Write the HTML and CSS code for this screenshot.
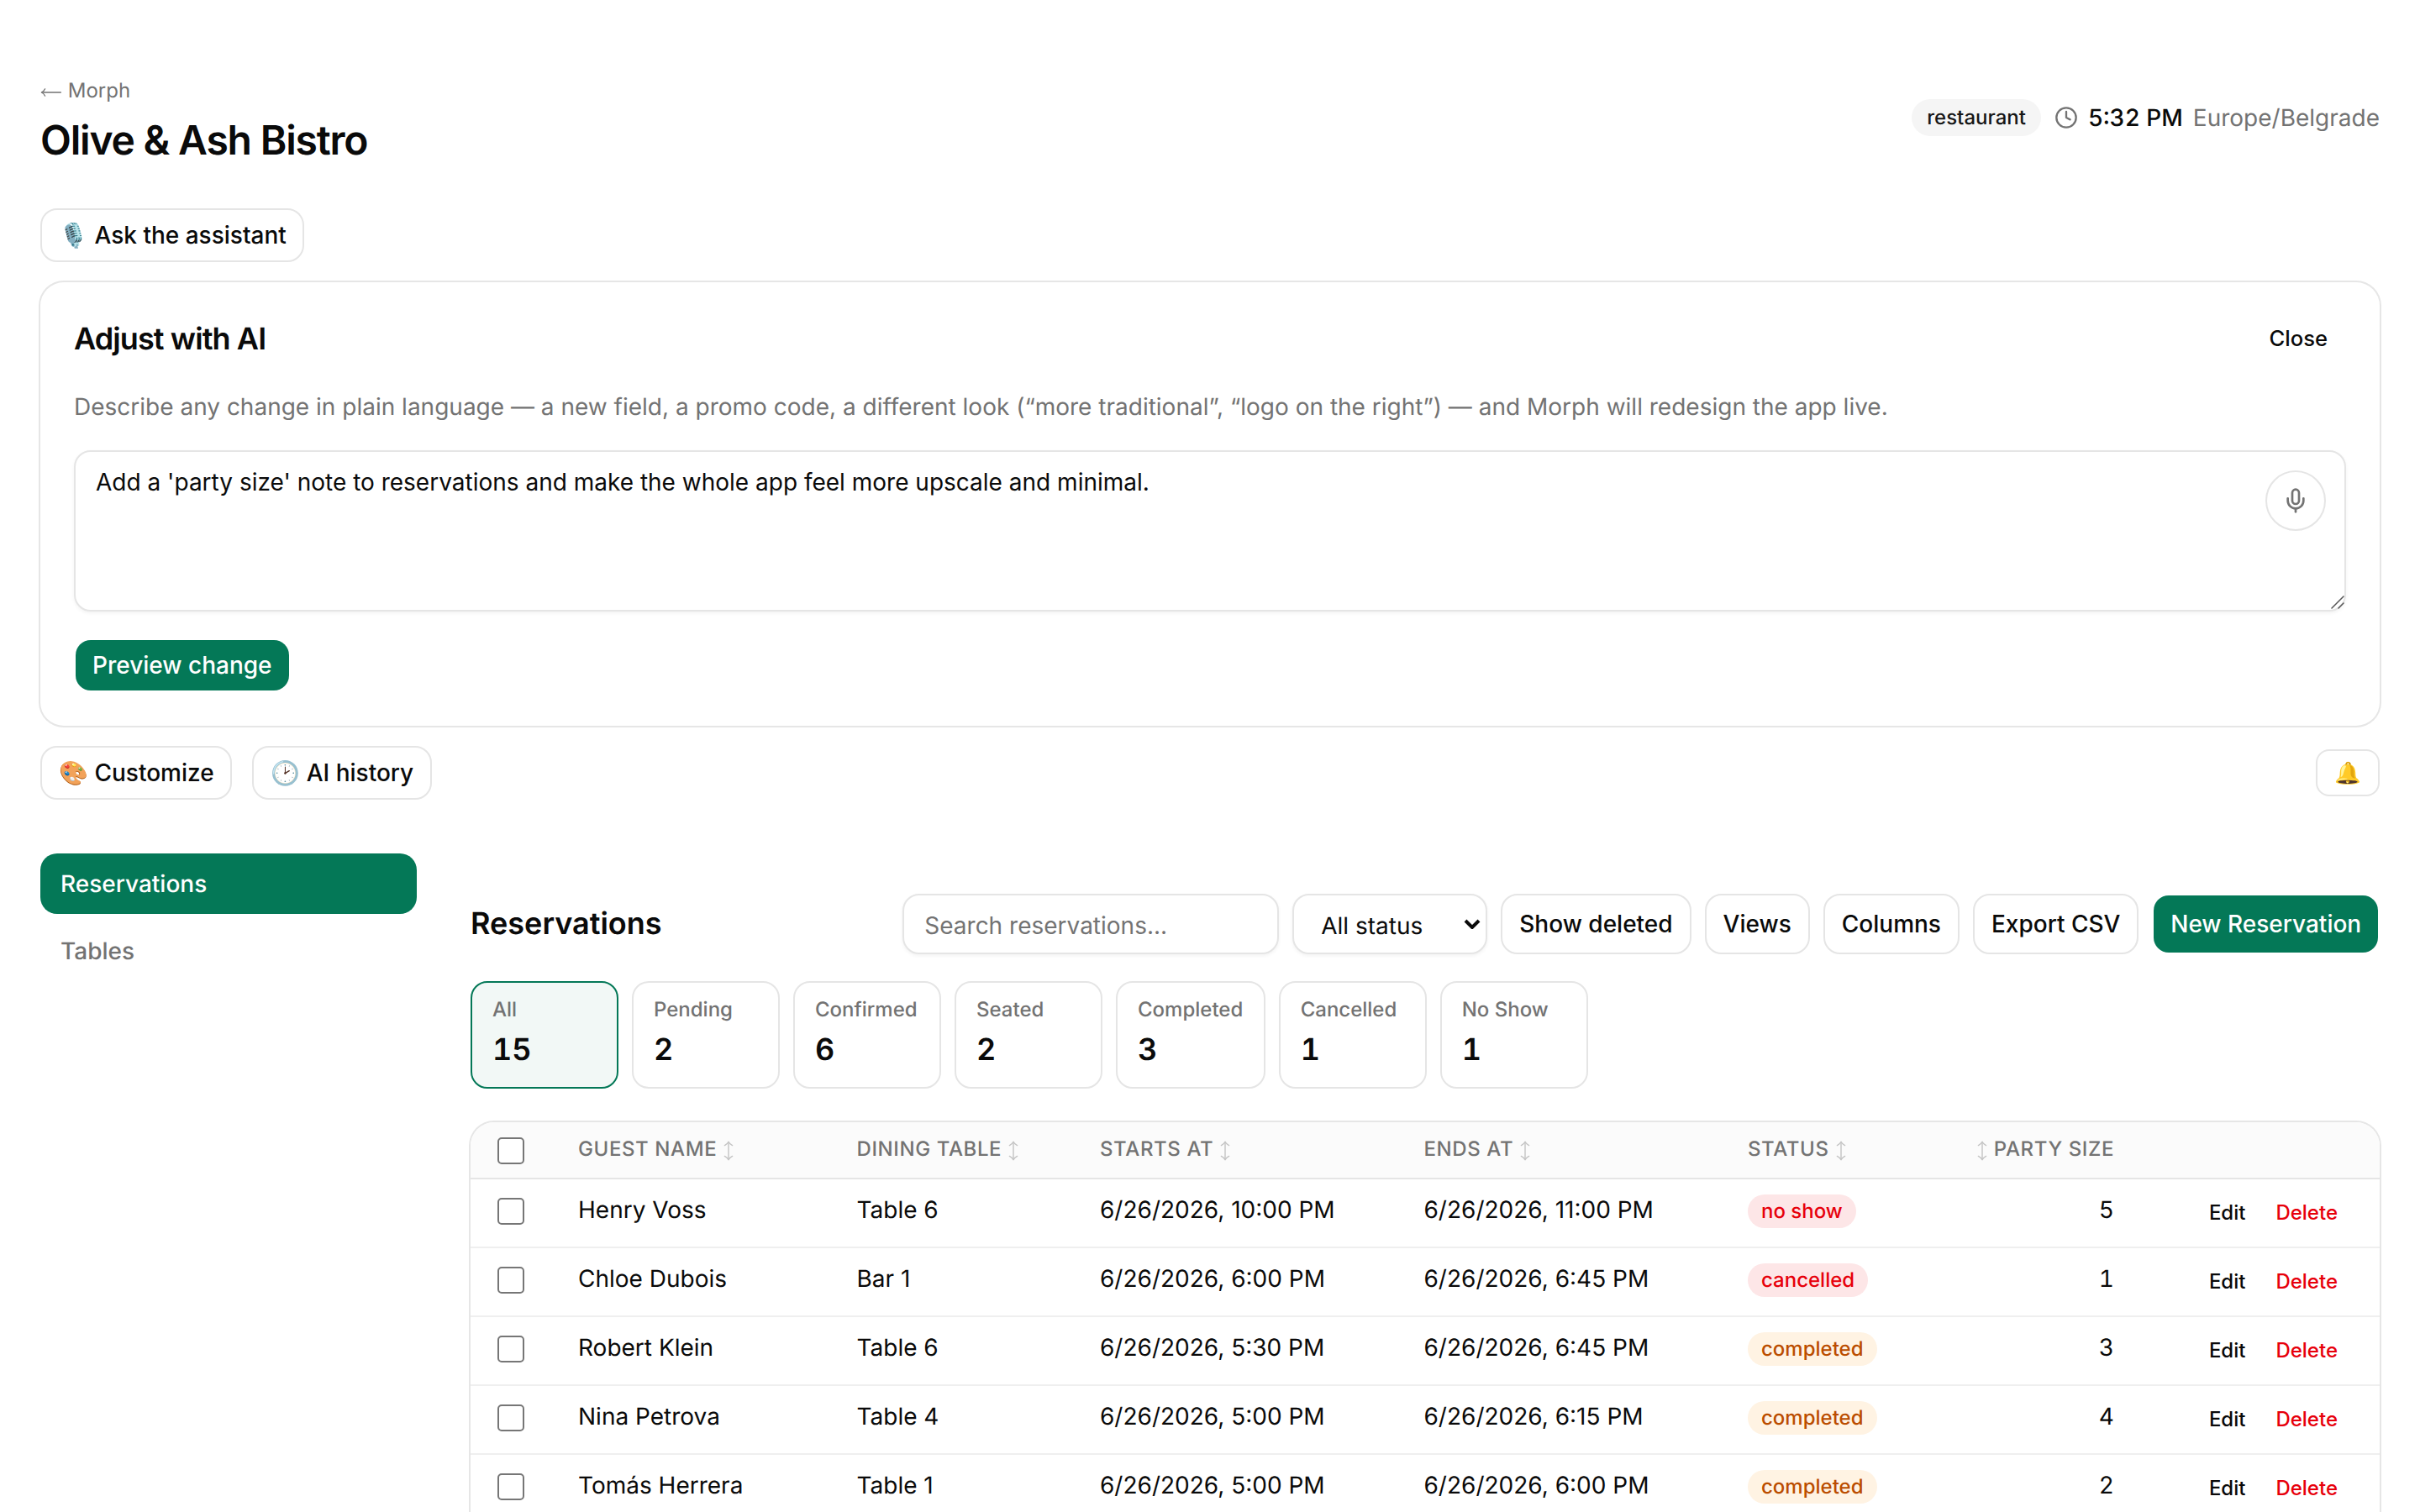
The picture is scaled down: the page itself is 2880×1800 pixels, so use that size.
FILE: index.html
```
<!DOCTYPE html>
<html lang="en">

<head>
    <meta charset="UTF-8">
    <meta name="viewport" content="width=device-width, initial-scale=1.0">
    <title>Olive &amp; Ash Bistro</title>
    <link rel="stylesheet" href="styles.css">
</head>

<body>
    <!-- shared sort arrow -->
    <svg class="defs" width="0" height="0">
        <symbol id="sort" viewBox="0 0 14 24">
            <path d="M7 2v20"/>
            <path d="M2.4 5.6Q5.6 4 7 1.2Q8.4 4 11.6 5.6M2.4 18.4Q5.6 20 7 22.8Q8.4 20 11.6 18.4"/>
        </symbol>
    </svg>

    <div class="page">
        <header class="header">
            <div class="brand">
                <a class="back" href="#"><svg viewBox="0 0 26 10"><path d="M2 5h22.4"/><path d="M5.6 .8Q4.4 3.6 1.4 5Q4.4 6.4 5.6 9.2"/></svg> Morph</a>
                <h1>Olive &amp; Ash Bistro</h1>
            </div>
            <div class="meta">
                <span class="tag">restaurant</span>
                <div class="clock">
                    <svg class="clock-icon" viewBox="0 0 24 24">
                        <circle cx="12" cy="12" r="10"/>
                        <path d="M12 6v6l4 2"/>
                    </svg>
                    <span class="time">5:32 PM</span>
                    <span class="zone">Europe/Belgrade</span>
                </div>
            </div>
        </header>

        <div class="actions">
            <button class="btn">🎙️ Ask the assistant</button>
        </div>

        <section class="card">
            <div class="card-head">
                <h2>Adjust with AI</h2>
                <button class="btn-ghost">Close</button>
            </div>
            <p class="hint">Describe any change in plain language — a new field, a promo code, a different look (“more traditional”, “logo on the right”) — and Morph will redesign the app live.</p>
            <div class="prompt">
                <textarea id="prompt">Add a 'party size' note to reservations and make the whole app feel more upscale and minimal.</textarea>
                <button class="mic" aria-label="Dictate">
                    <svg viewBox="0 0 24 24">
                        <path d="M12 19v3"/>
                        <path d="M19 10v2a7 7 0 0 1-14 0v-2"/>
                        <rect x="9" y="2" width="6" height="13" rx="3"/>
                    </svg>
                </button>
                <svg class="grip" viewBox="0 0 16 16">
                    <path d="M1 15L15 1M9 15l6-6"/>
                </svg>
            </div>
            <button class="btn btn-primary">Preview change</button>
        </section>

        <div class="actions">
            <button class="btn">🎨 Customize</button>
            <button class="btn">🕑 AI history</button>
            <button class="btn btn-sm bell" aria-label="Notifications">🔔</button>
        </div>

        <div class="layout">
            <nav class="sidebar">
                <a class="active" href="#">Reservations</a>
                <a href="#">Tables</a>
            </nav>

            <main class="main">
                <div class="toolbar">
                    <h2>Reservations</h2>
                    <input type="text" class="search" placeholder="Search reservations...">
                    <div class="select">
                        <span>All status</span>
                        <svg viewBox="0 0 20 12">
                            <path d="M2 2l8 8 8-8"/>
                        </svg>
                    </div>
                    <button class="btn">Show deleted</button>
                    <button class="btn">Views</button>
                    <button class="btn">Columns</button>
                    <button class="btn">Export CSV</button>
                    <button class="btn btn-primary">New Reservation</button>
                </div>

                <div class="stats">
                    <div class="stat active"><span>All</span><b>15</b></div>
                    <div class="stat"><span>Pending</span><b>2</b></div>
                    <div class="stat"><span>Confirmed</span><b>6</b></div>
                    <div class="stat"><span>Seated</span><b>2</b></div>
                    <div class="stat"><span>Completed</span><b>3</b></div>
                    <div class="stat"><span>Cancelled</span><b>1</b></div>
                    <div class="stat"><span>No Show</span><b>1</b></div>
                </div>

                <div class="table-card">
                    <table>
                        <thead>
                            <tr>
                                <th class="col-check"><input type="checkbox"></th>
                                <th class="col-guest">Guest Name <svg><use href="#sort"/></svg></th>
                                <th class="col-table">Dining Table <svg><use href="#sort"/></svg></th>
                                <th class="col-start">Starts At <svg><use href="#sort"/></svg></th>
                                <th class="col-end">Ends At <svg><use href="#sort"/></svg></th>
                                <th class="col-status">Status <svg><use href="#sort"/></svg></th>
                                <th class="col-size"><svg><use href="#sort"/></svg> Party Size</th>
                                <th></th>
                            </tr>
                        </thead>
                        <tbody>
                            <tr>
                                <td><input type="checkbox"></td>
                                <td>Henry Voss</td>
                                <td>Table 6</td>
                                <td>6/26/2026, 10:00 PM</td>
                                <td>6/26/2026, 11:00 PM</td>
                                <td><span class="badge red">no show</span></td>
                                <td class="num">5</td>
                                <td class="row-actions"><button>Edit</button><button class="delete">Delete</button></td>
                            </tr>
                            <tr>
                                <td><input type="checkbox"></td>
                                <td>Chloe Dubois</td>
                                <td>Bar 1</td>
                                <td>6/26/2026, 6:00 PM</td>
                                <td>6/26/2026, 6:45 PM</td>
                                <td><span class="badge red">cancelled</span></td>
                                <td class="num">1</td>
                                <td class="row-actions"><button>Edit</button><button class="delete">Delete</button></td>
                            </tr>
                            <tr>
                                <td><input type="checkbox"></td>
                                <td>Robert Klein</td>
                                <td>Table 6</td>
                                <td>6/26/2026, 5:30 PM</td>
                                <td>6/26/2026, 6:45 PM</td>
                                <td><span class="badge amber">completed</span></td>
                                <td class="num">3</td>
                                <td class="row-actions"><button>Edit</button><button class="delete">Delete</button></td>
                            </tr>
                            <tr>
                                <td><input type="checkbox"></td>
                                <td>Nina Petrova</td>
                                <td>Table 4</td>
                                <td>6/26/2026, 5:00 PM</td>
                                <td>6/26/2026, 6:15 PM</td>
                                <td><span class="badge amber">completed</span></td>
                                <td class="num">4</td>
                                <td class="row-actions"><button>Edit</button><button class="delete">Delete</button></td>
                            </tr>
                            <tr>
                                <td><input type="checkbox"></td>
                                <td>Tomás Herrera</td>
                                <td>Table 1</td>
                                <td>6/26/2026, 5:00 PM</td>
                                <td>6/26/2026, 6:00 PM</td>
                                <td><span class="badge amber">completed</span></td>
                                <td class="num">2</td>
                                <td class="row-actions"><button>Edit</button><button class="delete">Delete</button></td>
                            </tr>
                        </tbody>
                    </table>
                </div>
            </main>
        </div>
    </div>
</body>

</html>
```

FILE: styles.css
```
* {
    box-sizing: border-box;
}

html {
    overflow: hidden;
}

body {
    margin: 0;
    height: 100vh;
    overflow: hidden;
    background-color: #fff;
    color: #0a0a0a;
    font-family: Inter, sans-serif;
    font-size: 28px;
    line-height: 40px;
    text-rendering: geometricPrecision;
}

h1, h2, p {
    margin: 0;
}

a {
    color: inherit;
    text-decoration: none;
}

button, input, textarea {
    font: inherit;
    color: inherit;
}

svg {
    fill: none;
    stroke: currentColor;
    stroke-width: 2;
    stroke-linecap: round;
    stroke-linejoin: round;
}

.defs {
    display: none;
}

.page {
    height: 100vh;
    padding: 82px 48px 0;
    overflow: hidden;
}

/* header */
.header {
    display: flex;
    justify-content: space-between;
    align-items: center;
    height: 116px;
    margin-bottom: 50px;
}

.brand {
    display: flex;
    flex-direction: column;
    gap: 11px;
    padding-top: 11px;
}

.back {
    color: #737373;
    font-size: 24px;
    line-height: 32px;
}

.back svg {
    width: 26px;
    height: 10px;
    stroke-width: 1.3;
    vertical-align: 1px;
}

h1 {
    font-size: 48px;
    line-height: 64px;
    font-weight: 600;
    letter-spacing: -0.025em;
}

.meta {
    display: flex;
    align-items: center;
    gap: 16px;
}

.tag {
    height: 44px;
    padding: 0 18px;
    border-radius: 22px;
    background-color: #f5f5f5;
    color: #171717;
    font-size: 24px;
    font-weight: 500;
    line-height: 44px;
}

.clock {
    display: flex;
    align-items: center;
    gap: 12px;
    color: #737373;
}

.clock-icon {
    width: 28px;
    height: 28px;
}

.time {
    color: #0a0a0a;
    font-weight: 500;
    font-variant-numeric: tabular-nums;
}

/* buttons */
.actions {
    display: flex;
    align-items: center;
    gap: 24px;
}

.btn {
    height: 64px;
    padding: 0 20px;
    border: 2px solid #e5e5e5;
    border-radius: 20px;
    background-color: #fff;
    background-clip: padding-box;
    font-weight: 500;
    line-height: 40px;
    white-space: nowrap;
}

.actions .btn {
    padding-right: 19.6px;
}

.btn-primary {
    border-color: transparent;
    background-color: #047857;
    color: #fff;
}

.btn-sm {
    height: 56px;
    border-radius: 16px;
    font-size: 25.6px;
}

.actions .bell {
    margin-left: auto;
    padding-right: 20px;
}

.btn-ghost {
    height: 56px;
    padding: 0 22px 2px;
    border: none;
    background: none;
    font-size: 25.6px;
    font-weight: 500;
}

/* AI card */
.card {
    margin: 24px 0;
    padding: 40px;
    border-radius: 28px;
    box-shadow: 0 0 0 2px #e6e6e6;
}

.card-head {
    display: flex;
    justify-content: space-between;
    align-items: center;
}

.card h2 {
    margin-top: -2px;
    font-size: 36px;
    font-weight: 600;
    line-height: 56px;
    letter-spacing: -0.025em;
}

.hint {
    margin: 32px 0;
    color: #737373;
}

.prompt {
    position: relative;
    margin-bottom: 32px;
}

.prompt textarea {
    display: block;
    width: 100%;
    height: 192px;
    padding: 16px 112px 16px 24px;
    border: 2px solid #e5e5e5;
    border-radius: 20px;
    background-color: #fff;
    box-shadow: 0 2px 4px rgba(0, 0, 0, 0.05);
    resize: none;
    outline: none;
}

.mic {
    position: absolute;
    top: 24px;
    right: 24px;
    display: flex;
    align-items: center;
    justify-content: center;
    width: 72px;
    height: 72px;
    padding: 0;
    border: 2px solid #e5e5e5;
    border-radius: 50%;
    background-color: #fff;
    color: #737373;
}

.mic svg {
    width: 32px;
    height: 32px;
}

.grip {
    position: absolute;
    right: 2px;
    bottom: 3px;
    width: 16px;
    height: 16px;
    color: #555;
    stroke-width: 1.5;
}

/* layout */
.layout {
    display: flex;
    gap: 64px;
    margin-top: 64px;
}

.sidebar {
    display: flex;
    flex-direction: column;
    gap: 8px;
    width: 448px;
}

.sidebar a {
    padding: 16px 24px;
    border-radius: 20px;
    color: #737373;
    font-weight: 500;
}

.sidebar a.active {
    background-color: #047857;
    color: #fff;
}

.main {
    flex: 1;
    padding-top: 48px;
}

.toolbar {
    display: flex;
    align-items: center;
    gap: 16px;
    margin-bottom: 32px;
}

.toolbar h2 {
    margin-top: -2px;
    margin-right: auto;
    font-size: 36px;
    font-weight: 600;
    line-height: 56px;
}

.toolbar .btn {
    height: 72px;
}

.toolbar .btn-primary {
    padding: 0 19.8px;
}

.search, .select {
    height: 72px;
    border: 2px solid #e5e5e5;
    border-radius: 20px;
    background-color: #fff;
    box-shadow: 0 2px 4px rgba(0, 0, 0, 0.05);
}

.search {
    width: 448px;
    padding: 4px 24px 0;
    outline: none;
}

.search::placeholder {
    color: #737373;
}

.select {
    display: flex;
    align-items: center;
    justify-content: space-between;
    width: 232px;
    padding: 0 6px 0 32px;
}

.select span {
    padding-top: 3px;
}

.select svg {
    width: 20px;
    height: 12px;
    stroke-width: 4;
    stroke-linecap: butt;
    stroke-linejoin: miter;
}

/* status counters */
.stats {
    display: flex;
    gap: 16px;
    margin-bottom: 40px;
}

.stat {
    display: flex;
    flex-direction: column;
    gap: 3px;
    min-width: 176px;
    height: 128px;
    padding: 16px 24.4px 16px 24px;
    border: 2px solid #e5e5e5;
    border-radius: 20px;
}

.stat span {
    color: #737373;
    font-size: 24px;
    font-weight: 500;
    line-height: 32px;
}

.stat b {
    font-size: 36px;
    font-weight: 600;
    line-height: 56px;
    font-variant-numeric: tabular-nums;
}

.stat.active {
    border-color: #047857;
    background-color: #f2f8f6;
}

/* reservations table */
.table-card {
    min-height: 560px;
    border-radius: 28px;
    box-shadow: 0 0 0 2px #e6e6e6;
    overflow: hidden;
}

table {
    width: 100%;
    border-collapse: separate;
    border-spacing: 0;
    table-layout: fixed;
}

th, td {
    padding: 16px 32px 0;
    text-align: left;
    vertical-align: top;
    white-space: nowrap;
}

th {
    height: 68px;
    border-bottom: 2px solid #e5e5e5;
    background-color: #fbfbfb;
    color: #737373;
    font-size: 24px;
    font-weight: 500;
    line-height: 32px;
    letter-spacing: 0.025em;
    text-transform: uppercase;
}

th svg {
    width: 14px;
    height: 24px;
    stroke-width: 1.4;
    vertical-align: -6px;
    opacity: 0.4;
}

td {
    height: 82px;
    border-bottom: 2px solid #efefef;
}

.col-check { width: 96px; }
.col-guest { width: 331.5px; }
.col-table { width: 289.5px; }
.col-start { width: 385.5px; }
.col-end { width: 385.5px; }
.col-status { width: 240px; }
.col-size { width: 260px; text-align: right; }

th:last-child, .row-actions {
    padding-left: 0;
}

input[type="checkbox"] {
    appearance: none;
    display: block;
    width: 32px;
    height: 32px;
    margin: 2px 0 0;
    border: 2px solid #767676;
    border-radius: 5px;
    background-color: #fff;
}

td input[type="checkbox"] {
    margin-top: 6px;
}

.badge {
    display: block;
    width: fit-content;
    height: 40px;
    margin-top: 2px;
    padding: 0 16px;
    border-radius: 20px;
    font-size: 24px;
    font-weight: 500;
}

.badge.red {
    background-color: #fde6e7;
    color: #e7000b;
}

.badge.amber {
    background-color: #fff3e3;
    color: #bb4d00;
}

.num {
    text-align: right;
    font-variant-numeric: tabular-nums;
}

.row-actions {
    padding-top: 12px;
    text-align: right;
}

.row-actions button {
    height: 56px;
    padding: 0 18px;
    border: none;
    background: none;
    font-size: 24px;
    font-weight: 500;
}

.row-actions .delete {
    color: #e7000b;
}
```
